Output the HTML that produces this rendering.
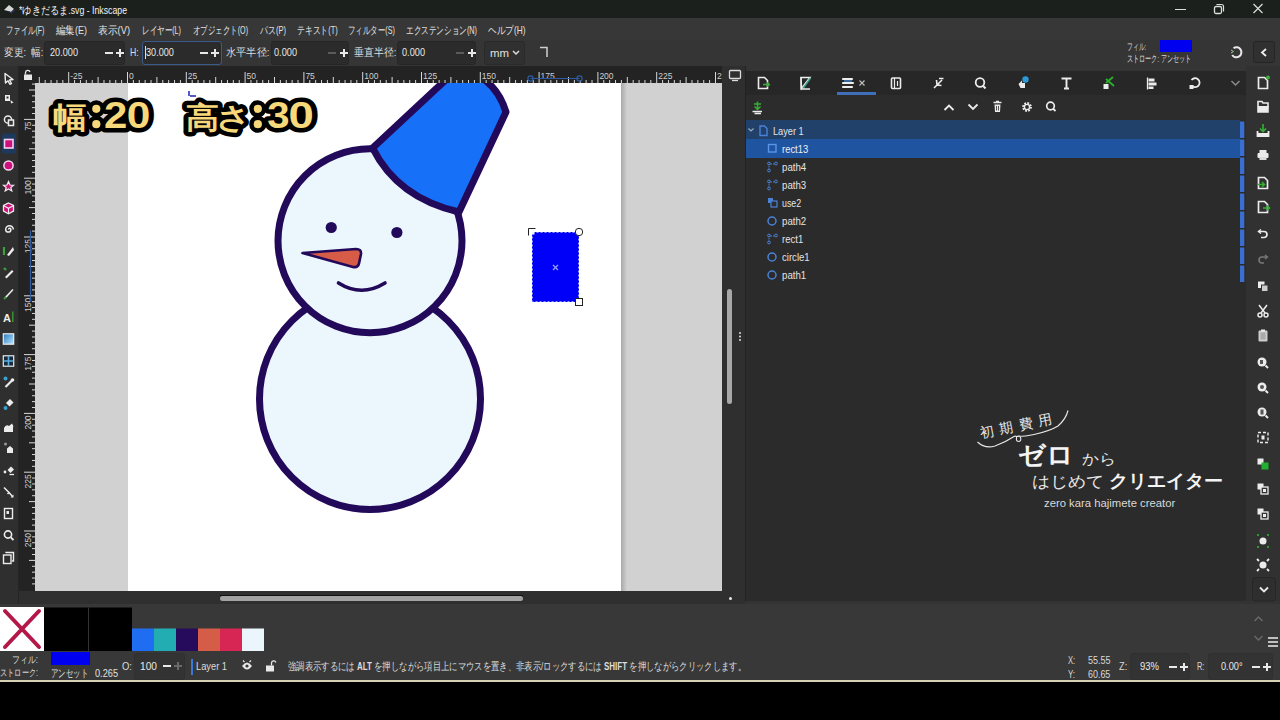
<!DOCTYPE html>
<html><head><meta charset="utf-8">
<style>
*{margin:0;padding:0;box-sizing:border-box}
html,body{width:1280px;height:720px;overflow:hidden;background:#000;font-family:"Liberation Sans",sans-serif;color:#e6e6e6}
.a{position:absolute}
.t{position:absolute;white-space:nowrap;line-height:1;transform-origin:0 50%}
svg{position:absolute;overflow:visible}
</style></head><body>
<div class="a" style="left:0px;top:0px;width:1280px;height:18px;background:#1b201c;"></div>
<div class="a" style="left:0px;top:18px;width:1280px;height:22px;background:#363736;"></div>
<div class="a" style="left:0px;top:40px;width:1280px;height:26px;background:#353535;"></div>
<div class="a" style="left:0px;top:66px;width:19px;height:538px;background:#2f2f2f;"></div>
<div class="a" style="left:18px;top:66px;width:1px;height:538px;background:#252525;"></div>
<div class="a" style="left:19px;top:66px;width:703px;height:17px;background:#232323;"></div>
<div class="a" style="left:19px;top:83px;width:16px;height:508px;background:#232323;"></div>
<div class="a" style="left:35px;top:83px;width:687px;height:508px;background:#d1d1d1;"></div>
<div class="a" style="left:128px;top:83px;width:493px;height:508px;background:#ffffff;"></div>
<div class="a" style="left:722px;top:66px;width:23px;height:538px;background:#2f2f2f;"></div>
<div class="a" style="left:19px;top:591px;width:703px;height:13px;background:#2f2f2f;"></div>
<div class="a" style="left:745px;top:66px;width:501px;height:535px;background:#2b2b2b;"></div>
<div class="a" style="left:745px;top:66px;width:1px;height:535px;background:#222222;"></div>
<div class="a" style="left:1246px;top:66px;width:34px;height:538px;background:#313131;"></div>
<div class="a" style="left:0px;top:604px;width:1280px;height:47px;background:#383838;"></div>
<div class="a" style="left:0px;top:651px;width:1280px;height:29px;background:#383838;"></div>
<div class="a" style="left:0px;top:680px;width:1280px;height:2px;background:#d6d2b4;"></div>
<svg style="left:3px;top:3px" width="14" height="12" viewBox="0 0 14 12"><path d="M1 7 L6 2 L11 6 L8 9 L5 8 Z" fill="#d8d8d8"/><path d="M5 8 L8 9 L11 6 L12 8 L8 11 Z" fill="#2a3050"/></svg>
<div class="t" style="transform:scaleX(0.833);left:19.4px;top:4.75px;font-size:10.5px;color:#f4f4f4;font-weight:400;">*ゆきだるま.svg - Inkscape</div>
<div class="a" style="left:1175px;top:9px;width:11px;height:1px;background:#dddddd;"></div>
<svg style="left:1213px;top:3px" width="12" height="12"><rect x="1.5" y="3.5" width="7" height="7" rx="1.5" fill="none" stroke="#ddd" stroke-width="1.3"/><path d="M3.5 1.5 H8.5 Q10.5 1.5 10.5 3.5 V8.5" fill="none" stroke="#ddd" stroke-width="1.2"/></svg>
<svg style="left:1252px;top:3px" width="12" height="12"><path d="M1.5 1 L10.5 10 M10.5 1 L1.5 10" stroke="#ddd" stroke-width="1.2"/></svg>
<div class="t" style="transform:scaleX(0.669);left:5.6px;top:24.75px;font-size:10.5px;color:#e2e2e2;font-weight:400;">ファイル(F)</div>
<div class="t" style="transform:scaleX(0.861);left:56px;top:24.75px;font-size:10.5px;color:#e2e2e2;font-weight:400;">編集(E)</div>
<div class="t" style="transform:scaleX(0.889);left:98px;top:24.75px;font-size:10.5px;color:#e2e2e2;font-weight:400;">表示(V)</div>
<div class="t" style="transform:scaleX(0.686);left:142px;top:24.75px;font-size:10.5px;color:#e2e2e2;font-weight:400;">レイヤー(L)</div>
<div class="t" style="transform:scaleX(0.678);left:193px;top:24.75px;font-size:10.5px;color:#e2e2e2;font-weight:400;">オブジェクト(O)</div>
<div class="t" style="transform:scaleX(0.722);left:260px;top:24.75px;font-size:10.5px;color:#e2e2e2;font-weight:400;">パス(P)</div>
<div class="t" style="transform:scaleX(0.709);left:297.3px;top:24.75px;font-size:10.5px;color:#e2e2e2;font-weight:400;">テキスト(T)</div>
<div class="t" style="transform:scaleX(0.678);left:348px;top:24.75px;font-size:10.5px;color:#e2e2e2;font-weight:400;">フィルター(S)</div>
<div class="t" style="transform:scaleX(0.692);left:406px;top:24.75px;font-size:10.5px;color:#e2e2e2;font-weight:400;">エクステンション(N)</div>
<div class="t" style="transform:scaleX(0.790);left:488.2px;top:24.75px;font-size:10.5px;color:#e2e2e2;font-weight:400;">ヘルプ(H)</div>
<div class="a" style="left:43.7px;top:41px;width:81.3px;height:23.5px;background:#2b2b2b;border:1px solid #262626;border-radius:3px;"></div>
<div class="a" style="left:142px;top:41px;width:79.5px;height:23.5px;background:#2b2b2b;border:1px solid #3a5a8a;border-radius:3px;"></div>
<div class="a" style="left:270.6px;top:41px;width:78.39999999999998px;height:23.5px;background:#2b2b2b;border:1px solid #262626;border-radius:3px;"></div>
<div class="a" style="left:397px;top:41px;width:79px;height:23.5px;background:#2b2b2b;border:1px solid #262626;border-radius:3px;"></div>
<div class="a" style="left:484px;top:41px;width:41px;height:23.5px;background:#303030;border:1px solid #2a2a2a;border-radius:3px;"></div>
<div class="t" style="transform:scaleX(0.883);left:4px;top:47.25px;font-size:10.5px;color:#dedede;font-weight:400;">変更:</div>
<div class="t" style="transform:scaleX(0.876);left:30.5px;top:47.25px;font-size:10.5px;color:#dedede;font-weight:400;">幅:</div>
<div class="t" style="transform:scaleX(0.832);left:49.8px;top:47.00px;font-size:11px;color:#e8e8e8;font-weight:400;">20.000</div>
<div class="a" style="left:104.7px;top:51.5px;width:8px;height:2px;background:#e8e8e8;"></div>
<div class="a" style="left:115.9px;top:51.5px;width:8px;height:2px;background:#e8e8e8;"></div>
<div class="a" style="left:118.9px;top:48.5px;width:2px;height:8px;background:#e8e8e8;"></div>
<div class="t" style="transform:scaleX(0.829);left:129.5px;top:47.25px;font-size:10.5px;color:#dedede;font-weight:400;">H:</div>
<div class="a" style="left:145px;top:46px;width:1px;height:13px;background:#e0e0e0;"></div>
<div class="t" style="transform:scaleX(0.829);left:146.3px;top:47.00px;font-size:11px;color:#e8e8e8;font-weight:400;">30.000</div>
<div class="a" style="left:200px;top:51.5px;width:8px;height:2px;background:#e8e8e8;"></div>
<div class="a" style="left:211.4px;top:51.5px;width:8px;height:2px;background:#e8e8e8;"></div>
<div class="a" style="left:214.4px;top:48.5px;width:2px;height:8px;background:#e8e8e8;"></div>
<div class="t" style="transform:scaleX(0.925);left:225.6px;top:47.25px;font-size:10.5px;color:#dedede;font-weight:400;">水平半径:</div>
<div class="t" style="transform:scaleX(0.835);left:274px;top:47.00px;font-size:11px;color:#e8e8e8;font-weight:400;">0.000</div>
<div class="a" style="left:328px;top:51.5px;width:8px;height:2px;background:#5a5a5a;"></div>
<div class="a" style="left:340px;top:51.5px;width:8px;height:2px;background:#e8e8e8;"></div>
<div class="a" style="left:343px;top:48.5px;width:2px;height:8px;background:#e8e8e8;"></div>
<div class="t" style="transform:scaleX(0.904);left:353.6px;top:47.25px;font-size:10.5px;color:#dedede;font-weight:400;">垂直半径:</div>
<div class="t" style="transform:scaleX(0.835);left:402px;top:47.00px;font-size:11px;color:#e8e8e8;font-weight:400;">0.000</div>
<div class="a" style="left:456px;top:51.5px;width:8px;height:2px;background:#5a5a5a;"></div>
<div class="a" style="left:468px;top:51.5px;width:8px;height:2px;background:#e8e8e8;"></div>
<div class="a" style="left:471px;top:48.5px;width:2px;height:8px;background:#e8e8e8;"></div>
<div class="t" style="transform:scaleX(1.086);left:490px;top:48.25px;font-size:10.5px;color:#e0e0e0;font-weight:400;">mm</div>
<svg style="left:512px;top:50px" width="8" height="6"><path d="M1 1 L4 4 L7 1" fill="none" stroke="#ddd" stroke-width="1.5"/></svg>
<svg style="left:539px;top:46px" width="10" height="12"><path d="M1 1.5 H8 V11" fill="none" stroke="#cfcfcf" stroke-width="1.5"/></svg>
<div class="t" style="transform:scaleX(0.582);left:1127px;top:42.25px;font-size:9.5px;color:#d8d8d8;font-weight:400;">フィル:</div>
<div class="a" style="left:1160px;top:40.3px;width:32px;height:11.7px;background:#0000f0;"></div>
<div class="t" style="transform:scaleX(0.608);left:1127px;top:53.75px;font-size:9.5px;color:#d8d8d8;font-weight:400;">ストローク: アンセット</div>
<svg style="left:1229px;top:45px" width="14" height="14"><path d="M4.5 3.2 A5 5 0 1 1 3.2 10" fill="none" stroke="#e8e8e8" stroke-width="2"/><path d="M2 5 L4.5 6.5 M2 8 L4.5 6.5" stroke="#9c9" stroke-width="1"/></svg>
<div class="a" style="left:1252.6px;top:41px;width:22.40000000000009px;height:22px;background:#303030;border:1px solid #252525;border-radius:3px;"></div>
<svg style="left:1260px;top:48px" width="8" height="9"><path d="M6 1 L2 4.5 L6 8" fill="none" stroke="#eee" stroke-width="1.8"/></svg>
<svg style="left:0;top:0" width="1280" height="720"><defs><clipPath id="hrc"><rect x="35" y="66" width="687" height="17"/></clipPath></defs><g clip-path="url(#hrc)"><path d="M39.30 77V83 M45.18 80V83 M51.06 80V83 M56.94 80V83 M62.82 80V83 M68.70 72V83 M74.58 80V83 M80.46 80V83 M86.34 80V83 M92.22 80V83 M98.10 77V83 M103.98 80V83 M109.86 80V83 M115.74 80V83 M121.62 80V83 M127.50 72V83 M133.38 80V83 M139.26 80V83 M145.14 80V83 M151.02 80V83 M156.90 77V83 M162.78 80V83 M168.66 80V83 M174.54 80V83 M180.42 80V83 M186.30 72V83 M192.18 80V83 M198.06 80V83 M203.94 80V83 M209.82 80V83 M215.70 77V83 M221.58 80V83 M227.46 80V83 M233.34 80V83 M239.22 80V83 M245.10 72V83 M250.98 80V83 M256.86 80V83 M262.74 80V83 M268.62 80V83 M274.50 77V83 M280.38 80V83 M286.26 80V83 M292.14 80V83 M298.02 80V83 M303.90 72V83 M309.78 80V83 M315.66 80V83 M321.54 80V83 M327.42 80V83 M333.30 77V83 M339.18 80V83 M345.06 80V83 M350.94 80V83 M356.82 80V83 M362.70 72V83 M368.58 80V83 M374.46 80V83 M380.34 80V83 M386.22 80V83 M392.10 77V83 M397.98 80V83 M403.86 80V83 M409.74 80V83 M415.62 80V83 M421.50 72V83 M427.38 80V83 M433.26 80V83 M439.14 80V83 M445.02 80V83 M450.90 77V83 M456.78 80V83 M462.66 80V83 M468.54 80V83 M474.42 80V83 M480.30 72V83 M486.18 80V83 M492.06 80V83 M497.94 80V83 M503.82 80V83 M509.70 77V83 M515.58 80V83 M521.46 80V83 M527.34 80V83 M533.22 80V83 M539.10 72V83 M544.98 80V83 M550.86 80V83 M556.74 80V83 M562.62 80V83 M568.50 77V83 M574.38 80V83 M580.26 80V83 M586.14 80V83 M592.02 80V83 M597.90 72V83 M603.78 80V83 M609.66 80V83 M615.54 80V83 M621.42 80V83 M627.30 77V83 M633.18 80V83 M639.06 80V83 M644.94 80V83 M650.82 80V83 M656.70 72V83 M662.58 80V83 M668.46 80V83 M674.34 80V83 M680.22 80V83 M686.10 77V83 M691.98 80V83 M697.86 80V83 M703.74 80V83 M709.62 80V83 M715.50 72V83" stroke="#d8d8d8" stroke-width="1"/><text x="70.2" y="78.5" font-size="8.5" fill="#cfcfcf" font-family="Liberation Sans">-25</text><text x="129.0" y="78.5" font-size="8.5" fill="#cfcfcf" font-family="Liberation Sans">0</text><text x="187.8" y="78.5" font-size="8.5" fill="#cfcfcf" font-family="Liberation Sans">25</text><text x="246.6" y="78.5" font-size="8.5" fill="#cfcfcf" font-family="Liberation Sans">50</text><text x="305.4" y="78.5" font-size="8.5" fill="#cfcfcf" font-family="Liberation Sans">75</text><text x="364.2" y="78.5" font-size="8.5" fill="#cfcfcf" font-family="Liberation Sans">100</text><text x="423.0" y="78.5" font-size="8.5" fill="#cfcfcf" font-family="Liberation Sans">125</text><text x="481.8" y="78.5" font-size="8.5" fill="#cfcfcf" font-family="Liberation Sans">150</text><text x="540.6" y="78.5" font-size="8.5" fill="#cfcfcf" font-family="Liberation Sans">175</text><text x="599.4" y="78.5" font-size="8.5" fill="#cfcfcf" font-family="Liberation Sans">200</text><text x="658.2" y="78.5" font-size="8.5" fill="#cfcfcf" font-family="Liberation Sans">225</text><text x="717.0" y="78.5" font-size="8.5" fill="#cfcfcf" font-family="Liberation Sans">250</text></g><text transform="translate(31 121.4) rotate(-90)" text-anchor="end" font-size="8.5" fill="#cfcfcf" font-family="Liberation Sans">75</text><text transform="translate(31 180.2) rotate(-90)" text-anchor="end" font-size="8.5" fill="#cfcfcf" font-family="Liberation Sans">100</text><text transform="translate(31 239.0) rotate(-90)" text-anchor="end" font-size="8.5" fill="#cfcfcf" font-family="Liberation Sans">125</text><text transform="translate(31 297.8) rotate(-90)" text-anchor="end" font-size="8.5" fill="#cfcfcf" font-family="Liberation Sans">150</text><text transform="translate(31 356.6) rotate(-90)" text-anchor="end" font-size="8.5" fill="#cfcfcf" font-family="Liberation Sans">175</text><text transform="translate(31 415.4) rotate(-90)" text-anchor="end" font-size="8.5" fill="#cfcfcf" font-family="Liberation Sans">200</text><text transform="translate(31 474.2) rotate(-90)" text-anchor="end" font-size="8.5" fill="#cfcfcf" font-family="Liberation Sans">225</text><text transform="translate(31 533.0) rotate(-90)" text-anchor="end" font-size="8.5" fill="#cfcfcf" font-family="Liberation Sans">250</text><path d="M32 84.12H35 M29 90.00H35 M32 95.88H35 M32 101.76H35 M32 107.64H35 M32 113.52H35 M24 119.40H35 M32 125.28H35 M32 131.16H35 M32 137.04H35 M32 142.92H35 M29 148.80H35 M32 154.68H35 M32 160.56H35 M32 166.44H35 M32 172.32H35 M24 178.20H35 M32 184.08H35 M32 189.96H35 M32 195.84H35 M32 201.72H35 M29 207.60H35 M32 213.48H35 M32 219.36H35 M32 225.24H35 M32 231.12H35 M24 237.00H35 M32 242.88H35 M32 248.76H35 M32 254.64H35 M32 260.52H35 M29 266.40H35 M32 272.28H35 M32 278.16H35 M32 284.04H35 M32 289.92H35 M24 295.80H35 M32 301.68H35 M32 307.56H35 M32 313.44H35 M32 319.32H35 M29 325.20H35 M32 331.08H35 M32 336.96H35 M32 342.84H35 M32 348.72H35 M24 354.60H35 M32 360.48H35 M32 366.36H35 M32 372.24H35 M32 378.12H35 M29 384.00H35 M32 389.88H35 M32 395.76H35 M32 401.64H35 M32 407.52H35 M24 413.40H35 M32 419.28H35 M32 425.16H35 M32 431.04H35 M32 436.92H35 M29 442.80H35 M32 448.68H35 M32 454.56H35 M32 460.44H35 M32 466.32H35 M24 472.20H35 M32 478.08H35 M32 483.96H35 M32 489.84H35 M32 495.72H35 M29 501.60H35 M32 507.48H35 M32 513.36H35 M32 519.24H35 M32 525.12H35 M24 531.00H35 M32 536.88H35 M32 542.76H35 M32 548.64H35 M32 554.52H35 M29 560.40H35 M32 566.28H35 M32 572.16H35 M32 578.04H35 M32 583.92H35" stroke="#d8d8d8" stroke-width="1"/><path d="M530.5 78.5H579.5" stroke="#2d5aa0" stroke-width="1.2"/><circle cx="530.5" cy="78.5" r="2.6" fill="none" stroke="#2d5aa0" stroke-width="1.2"/><circle cx="579.5" cy="78.5" r="2.6" fill="none" stroke="#2d5aa0" stroke-width="1.2"/><path d="M30.5 230.5V302" stroke="#2d5aa0" stroke-width="1.2"/><rect x="24" y="74.5" width="8" height="5.5" fill="#e8e8e8"/><path d="M25.5 74.5V72.5A2.3 2.3 0 0 1 30 72" fill="none" stroke="#e8e8e8" stroke-width="1.3"/><rect x="729.5" y="70.5" width="11" height="8" rx="1" fill="none" stroke="#dcdcdc" stroke-width="1.3"/><path d="M732 80.5H738" stroke="#dcdcdc" stroke-width="1.3"/></svg>
<svg style="left:0;top:0" width="20" height="600"><path d="M5 73.5 L13 79.5 L9.5 80 L11.5 83.5 L9.8 84.3 L8 80.8 L5.5 83 Z" fill="#2f2f2f" stroke="#ececec" stroke-width="1.4" stroke-linejoin="round"/><path d="M5 95 H10 V101 H5 Z" fill="#ececec"/><path d="M6.5 96.5 H8.5 V98.5 H6.5Z" fill="#2f2f2f"/><path d="M10.5 100 L13.5 102.5 L11 103.5Z" fill="#ececec"/><circle cx="8" cy="119.5" r="3.6" fill="none" stroke="#ececec" stroke-width="1.5"/><rect x="8.5" y="120" width="5" height="5.5" fill="#2f2f2f" stroke="#ececec" stroke-width="1.5"/><rect x="2" y="133.5" width="14" height="20" rx="2" fill="#1d3a5e"/><rect x="4.5" y="139.5" width="8.5" height="8.5" fill="#d0107a" stroke="#f4d0f0" stroke-width="1.6"/><circle cx="8.5" cy="165.5" r="4.6" fill="#d0107a" stroke="#f0d8f0" stroke-width="1.5"/><path d="M8.5 181.5 L10 185 L13.5 185.2 L10.8 187.5 L11.8 191 L8.5 189 L5.2 191 L6.2 187.5 L3.5 185.2 L7 185 Z" fill="#d0107a" stroke="#ececec" stroke-width="1.2"/><path d="M8.5 203 L13.5 205.5 V211 L8.5 213.8 L3.5 211 V205.5 Z" fill="#d0107a" stroke="#ececec" stroke-width="1.3"/><path d="M3.8 205.8 L8.5 208.3 L13.2 205.8 M8.5 208.3 V213.5" stroke="#ececec" stroke-width="1.1" fill="none"/><path d="M8.5 229.5 a1.2 1.2 0 0 1 2.4 0 a2.6 2.6 0 0 1 -5.2 0 a3.8 3.8 0 0 1 7.6 0" fill="none" stroke="#ececec" stroke-width="1.5"/><path d="M4 247 V255" stroke="#3aa03a" stroke-width="2.2"/><path d="M7 255 L13 247 L14 250 L9 256 Z" fill="#ececec"/><path d="M4 268 L6 270" stroke="#3aa03a" stroke-width="2.4"/><path d="M5 277 L12 270 L13.5 271.5 L6.5 278.5 Z" fill="#ececec"/><path d="M4 299 L7 296" stroke="#3aa03a" stroke-width="2"/><path d="M6 297 L13 289.5" stroke="#ececec" stroke-width="1.6"/><text x="3" y="321.5" font-size="11" font-weight="bold" fill="#ececec" font-family="Liberation Sans">A</text><path d="M12.8 311.5 V322" stroke="#3aa03a" stroke-width="1.3"/><defs><linearGradient id="gr" x1="0" y1="0" x2="1" y2="1"><stop offset="0" stop-color="#2a78c0"/><stop offset="1" stop-color="#b8e8ff"/></linearGradient></defs><rect x="3.3" y="333.8" width="10.4" height="10.4" fill="url(#gr)" stroke="#ececec" stroke-width="1.2"/><rect x="3.3" y="355.8" width="10.4" height="10.4" fill="#1a2a3a" stroke="#ececec" stroke-width="1.2"/><path d="M8.5 356 V366 M3.5 361 H13.5" stroke="#5ab0e0" stroke-width="1.6"/><circle cx="5.5" cy="378.5" r="2" fill="#3aa0d0"/><path d="M5.5 387 L12 380.5" stroke="#ececec" stroke-width="2.2"/><circle cx="12.5" cy="380" r="1.8" fill="#ececec"/><path d="M6 403 L10 399 L13.5 402.5 L9.5 406.5Z" fill="#ececec"/><circle cx="5.5" cy="408" r="2" fill="#3aa0d0"/><path d="M4 432 V428 Q6 424 9 426 L12 423.5 Q14 426 13 428 V432Z" fill="#ececec"/><circle cx="5.5" cy="444" r="1.5" fill="#999"/><path d="M7 453 V448.5 L10 446 L13 448.5 V453Z" fill="#ececec"/><path d="M7.5 470 L11 466.5 L14 469.5 L10.5 473Z" fill="#ececec"/><circle cx="5" cy="472" r="1.4" fill="#ececec"/><path d="M9.5 474.5 H14" stroke="#ececec" stroke-width="1.3"/><path d="M4 487.5 L9 492.5 L7.5 494 M9 492.5 L12.5 496.5" fill="none" stroke="#ececec" stroke-width="1.5"/><path d="M10.5 497.5 L13.5 497.5 L13.5 494.5Z" fill="#ececec"/><rect x="4.5" y="508.5" width="8" height="10" fill="none" stroke="#ececec" stroke-width="1.4"/><rect x="6.5" y="511" width="2.5" height="3" fill="#ececec"/><circle cx="8" cy="534.5" r="3.6" fill="none" stroke="#ececec" stroke-width="1.6"/><path d="M10.8 537.3 L13.5 540" stroke="#ececec" stroke-width="1.8"/><rect x="3.5" y="555" width="7.5" height="8.5" fill="#2f2f2f" stroke="#ececec" stroke-width="1.4"/><path d="M6 553 V552.5 H13.5 V561 H12" fill="none" stroke="#ececec" stroke-width="1.4"/></svg>
<svg style="left:0;top:0" width="1280" height="720"><defs><clipPath id="cc"><rect x="35" y="83" width="687" height="508"/></clipPath></defs><g clip-path="url(#cc)"><circle cx="370" cy="399" r="110.5" fill="#ebf7fd" stroke="#23095a" stroke-width="7"/><circle cx="370" cy="240.8" r="92" fill="#ebf7fd" stroke="#23095a" stroke-width="7"/><path d="M372.6 148 L452 74 L476 74 Q498 86 506 112 L459 212 Q397.6 198 372.6 148 Z" fill="#1770f8" stroke="#23095a" stroke-width="7" stroke-linejoin="round"/><circle cx="331.25" cy="227.5" r="5.6" fill="#23095a"/><circle cx="396.9" cy="232.5" r="5.6" fill="#23095a"/><path d="M302.5 253 L356 249 Q361.5 249 361 254 L359 263.5 Q358 268 353 267 Z" fill="#d65c48" stroke="#23095a" stroke-width="2.6" stroke-linejoin="round"/><path d="M338.5 283 Q361.5 297.5 385 283" fill="none" stroke="#23095a" stroke-width="3.6" stroke-linecap="round"/><rect x="532" y="232" width="47" height="70" fill="#0000f8"/><path d="M532.5 232.5 H578.5 V301.5 H532.5 Z" fill="none" stroke="#fff" stroke-width="1" stroke-dasharray="2 2" opacity=".6"/><path d="M528.5 235.5 V228.5 H535.5" fill="none" stroke="#222" stroke-width="1"/><rect x="529.5" y="229.5" width="5" height="5" fill="#fff" opacity=".9"/><circle cx="579" cy="232" r="3.7" fill="#fff" stroke="#222" stroke-width="1"/><rect x="575.5" y="298.5" width="7" height="7" fill="#fff" stroke="#222" stroke-width="1"/><path d="M553 265 L558 270 M558 265 L553 270" stroke="#9aa0ff" stroke-width="1.2"/><path d="M189 91 V96 M190 96 H196" stroke="#2020c0" stroke-width="1.5"/><g font-family="Liberation Sans" font-weight="bold" fill="#000" stroke="#000" stroke-width="9" stroke-linejoin="round"><text x="52.97" y="128" font-size="30" textLength="33.96000000000001" lengthAdjust="spacingAndGlyphs">幅</text><circle cx="96.3" cy="108.8" r="4.1"/><circle cx="96.3" cy="124.2" r="4.1"/><text x="104.1" y="127.8" font-size="36.3" textLength="23.30000000000001" lengthAdjust="spacingAndGlyphs">2</text><text x="126.65" y="127.8" font-size="36.3" textLength="23.599999999999994" lengthAdjust="spacingAndGlyphs">0</text><text x="185.5" y="128" font-size="30" textLength="33.099999999999994" lengthAdjust="spacingAndGlyphs">高</text><text x="216.2" y="128" font-size="30" textLength="35.30000000000001" lengthAdjust="spacingAndGlyphs">さ</text><circle cx="257.8" cy="108.8" r="4.1"/><circle cx="257.8" cy="124.2" r="4.1"/><text x="267.15" y="127.8" font-size="36.3" textLength="22.30000000000001" lengthAdjust="spacingAndGlyphs">3</text><text x="288.46" y="127.8" font-size="36.3" textLength="25.30000000000001" lengthAdjust="spacingAndGlyphs">0</text></g><g font-family="Liberation Sans" font-weight="bold" fill="#f7d87a"><text x="52.97" y="128" font-size="30" textLength="33.96000000000001" lengthAdjust="spacingAndGlyphs">幅</text><circle cx="96.3" cy="108.8" r="4.1"/><circle cx="96.3" cy="124.2" r="4.1"/><text x="104.1" y="127.8" font-size="36.3" textLength="23.30000000000001" lengthAdjust="spacingAndGlyphs">2</text><text x="126.65" y="127.8" font-size="36.3" textLength="23.599999999999994" lengthAdjust="spacingAndGlyphs">0</text><text x="185.5" y="128" font-size="30" textLength="33.099999999999994" lengthAdjust="spacingAndGlyphs">高</text><text x="216.2" y="128" font-size="30" textLength="35.30000000000001" lengthAdjust="spacingAndGlyphs">さ</text><circle cx="257.8" cy="108.8" r="4.1"/><circle cx="257.8" cy="124.2" r="4.1"/><text x="267.15" y="127.8" font-size="36.3" textLength="22.30000000000001" lengthAdjust="spacingAndGlyphs">3</text><text x="288.46" y="127.8" font-size="36.3" textLength="25.30000000000001" lengthAdjust="spacingAndGlyphs">0</text></g></g></svg>
<div class="a" style="left:621px;top:83px;width:6px;height:508px;background:linear-gradient(90deg,#a8a8a8,#d1d1d1)"></div>
<div class="a" style="left:220px;top:595px;width:303px;height:1px;background:#111111;"></div>
<div class="a" style="left:220px;top:596px;width:303px;height:5px;background:#a2a2a2;border-radius:3px"></div>
<div class="a" style="left:726.5px;top:289px;width:5.5px;height:115px;background:#a8a8a8;border-radius:3px"></div>
<div class="a" style="left:729px;top:597px;width:3px;height:3px;background:#e8e8e8;border-radius:2px"></div>
<svg style="left:738px;top:331px" width="5" height="11"><circle cx="2" cy="2" r="1" fill="#ddd"/><circle cx="2" cy="5.5" r="1" fill="#ddd"/><circle cx="2" cy="9" r="1" fill="#ddd"/></svg>
<div class="a" style="left:746px;top:66px;width:500px;height:5px;background:#353535;"></div>
<div class="a" style="left:746px;top:71px;width:500px;height:24px;background:#272727;"></div>
<div class="a" style="left:746px;top:95px;width:500px;height:25px;background:#2c2c2c;"></div>
<div class="a" style="left:746px;top:120px;width:494px;height:18.5px;background:#21406a;"></div>
<div class="a" style="left:746px;top:138.5px;width:494px;height:19px;background:#1f55a0;"></div>
<div class="a" style="left:836.5px;top:92px;width:39.5px;height:3px;background:#3f6fb8;"></div>
<svg style="left:0;top:0" width="1280" height="720"><path d="M758.5 77.5 H764.5 L767.5 80.5 V88.5 H758.5 Z" fill="none" stroke="#ececec" stroke-width="1.6"/><path d="M763 84.5 H769 M767 82.5 L769.3 84.5 L767 86.5" fill="none" stroke="#3ab03a" stroke-width="1.5"/><path d="M801 77.5 H810 L801.5 88.5 Z" fill="none" stroke="#ececec" stroke-width="1.5"/><path d="M810.5 78 L803 88.5" stroke="#3aa08a" stroke-width="1.6"/><path d="M801 77 V89 H810" fill="none" stroke="#ececec" stroke-width="1.3"/><path d="M843 79 H852 M843 83 H853 M843 87 H852" stroke="#ececec" stroke-width="2.2" stroke-linecap="round"/><path d="M844 81 H852" stroke="#3a8ad0" stroke-width="1.4"/><path d="M859.5 80.5 L864.5 85.5 M864.5 80.5 L859.5 85.5" stroke="#bbb" stroke-width="1.2"/><rect x="891.5" y="78" width="9" height="10.5" rx="1" fill="none" stroke="#ececec" stroke-width="1.6"/><path d="M894.5 78 V88.5 M897.5 81 V86" stroke="#ececec" stroke-width="1.2"/><path d="M934 88 L942 80 M936.5 80 L937 85 L941.5 85.5 M939 78.5 L943.5 78.5" fill="none" stroke="#ececec" stroke-width="1.6"/><circle cx="980" cy="82.5" r="4.3" fill="none" stroke="#ececec" stroke-width="1.8"/><path d="M983 85.8 L985.5 88.5" stroke="#ececec" stroke-width="2"/><path d="M1018.5 84 L1022 80.5 L1022 83 L1025 83 V88 H1020.5 Z" fill="#ececec"/><circle cx="1025.5" cy="79.5" r="3.2" fill="#2a9ad8"/><path d="M1061.5 78.5 H1071.5 M1066.5 78.5 V88.5 M1064 88.5 H1069" stroke="#ececec" stroke-width="1.9"/><rect x="1103.5" y="84" width="5" height="5" fill="#ececec"/><path d="M1106 83 L1113 77 M1106 79 L1114 86" stroke="#2bb02b" stroke-width="1.8"/><path d="M1147.5 77.5 V89.5" stroke="#ececec" stroke-width="1.3"/><rect x="1148.5" y="78.5" width="6" height="3" fill="#ececec"/><rect x="1148.5" y="82.5" width="8" height="3" fill="#ececec"/><rect x="1148.5" y="86.5" width="5" height="2.5" fill="#ececec"/><path d="M1191.5 80 A4.5 4.5 0 1 1 1192 86" fill="none" stroke="#ececec" stroke-width="1.8"/><rect x="1189.5" y="85" width="4" height="4" fill="#ececec"/><path d="M1231.5 81 L1235.5 85 L1239.5 81" fill="none" stroke="#8a8a8a" stroke-width="1.5"/><path d="M752.5 111.5 H762 M754.5 113.5 H761" stroke="#ececec" stroke-width="1.6"/><path d="M757.5 101.5 V109.5 M754.5 106.5 L757.5 109.5 L760.5 106.5 M754 104 H761" fill="none" stroke="#35b035" stroke-width="1.5"/><path d="M944.5 110 L949 105.5 L953.5 110" fill="none" stroke="#ececec" stroke-width="1.8"/><path d="M968.5 104.5 L973 109 L977.5 104.5" fill="none" stroke="#ececec" stroke-width="1.8"/><path d="M993.5 102.5 H1001.5 M996 101.5 H999" stroke="#ececec" stroke-width="1.6"/><path d="M994.5 104.5 H1000.5 L1000 112 H995 Z" fill="#ececec"/><path d="M996.5 106 V110.5 M998.5 106 V110.5" stroke="#2c2c2c" stroke-width=".8"/><circle cx="1027" cy="107" r="3.6" fill="none" stroke="#ececec" stroke-width="2.6" stroke-dasharray="1.6 1.2"/><circle cx="1027" cy="107" r="2.6" fill="none" stroke="#ececec" stroke-width="1.4"/><circle cx="1050.5" cy="106" r="3.8" fill="none" stroke="#ececec" stroke-width="1.7"/><path d="M1053.3 108.8 L1055.5 111" stroke="#ececec" stroke-width="1.9"/><path d="M748.5 128.5 L751 131 L753.5 128.5" fill="none" stroke="#9ab" stroke-width="1.2"/><path d="M760 126 H764.5 L767 128.5 V135.5 H760 Z" fill="none" stroke="#4a82d8" stroke-width="1.4"/><rect x="768.5" y="144.5" width="7.5" height="7.5" fill="none" stroke="#5a95e8" stroke-width="1.4"/><path d="M769 170 V164 H775" fill="none" stroke="#4a82d8" stroke-width="1" stroke-dasharray="1.5 1"/><circle cx="769" cy="163.5" r="1.4" fill="none" stroke="#4a82d8" stroke-width="1"/><circle cx="776" cy="163.5" r="1.4" fill="none" stroke="#4a82d8" stroke-width="1"/><circle cx="769" cy="170.5" r="1.4" fill="none" stroke="#4a82d8" stroke-width="1"/><path d="M769 188 V182 H775" fill="none" stroke="#4a82d8" stroke-width="1" stroke-dasharray="1.5 1"/><circle cx="769" cy="181.5" r="1.4" fill="none" stroke="#4a82d8" stroke-width="1"/><circle cx="776" cy="181.5" r="1.4" fill="none" stroke="#4a82d8" stroke-width="1"/><circle cx="769" cy="188.5" r="1.4" fill="none" stroke="#4a82d8" stroke-width="1"/><path d="M769 242 V236 H775" fill="none" stroke="#4a82d8" stroke-width="1" stroke-dasharray="1.5 1"/><circle cx="769" cy="235.5" r="1.4" fill="none" stroke="#4a82d8" stroke-width="1"/><circle cx="776" cy="235.5" r="1.4" fill="none" stroke="#4a82d8" stroke-width="1"/><circle cx="769" cy="242.5" r="1.4" fill="none" stroke="#4a82d8" stroke-width="1"/><rect x="768" y="198" width="5" height="5" fill="#4a82d8"/><rect x="771" y="201" width="6" height="6" fill="#2b2b2b" stroke="#4a82d8" stroke-width="1.2"/><circle cx="772" cy="221" r="4" fill="none" stroke="#4a82d8" stroke-width="1.5"/><circle cx="772" cy="257" r="4" fill="none" stroke="#4a82d8" stroke-width="1.5"/><circle cx="772" cy="275" r="4" fill="none" stroke="#4a82d8" stroke-width="1.5"/><rect x="1240" y="121.5" width="4.3" height="16.5" fill="#3a6fd0"/><rect x="1240" y="139.5" width="4.3" height="16.5" fill="#3a6fd0"/><rect x="1240" y="157.5" width="4.3" height="16.5" fill="#3a6fd0"/><rect x="1240" y="175.5" width="4.3" height="16.5" fill="#3a6fd0"/><rect x="1240" y="193.5" width="4.3" height="16.5" fill="#3a6fd0"/><rect x="1240" y="211.5" width="4.3" height="16.5" fill="#3a6fd0"/><rect x="1240" y="229.5" width="4.3" height="16.5" fill="#3a6fd0"/><rect x="1240" y="247.5" width="4.3" height="16.5" fill="#3a6fd0"/><rect x="1240" y="265.5" width="4.3" height="16.5" fill="#3a6fd0"/><path d="M977.5 442 Q985 449 995 446 Q1005 442.5 1014 436.5 Q1017 435 1016.5 438 Q1016 441.5 1019 441.5 Q1021.5 441 1020.5 437.5 Q1019.5 435 1017 436.5 Q1026 436.5 1034 434.5 Q1050 431 1058 426 Q1066 419 1068 410.5" fill="none" stroke="#e8e8e8" stroke-width="1.1"/><g transform="translate(981 437.5) rotate(-11)" fill="#e8e8e8" font-size="14" font-family="Liberation Sans"><text x="0" y="0" textLength="73" lengthAdjust="spacing">初期費用</text></g></svg>
<div class="t" style="transform:scaleX(0.834);left:772.6px;top:125.50px;font-size:11px;color:#e4e4e4;font-weight:400;">Layer 1</div>
<div class="t" style="transform:scaleX(0.857);left:781.8px;top:144.00px;font-size:11px;color:#e8eef8;font-weight:400;">rect13</div>
<div class="t" style="transform:scaleX(0.879);left:781.8px;top:162.00px;font-size:11px;color:#e4e4e4;font-weight:400;">path4</div>
<div class="t" style="transform:scaleX(0.879);left:781.8px;top:180.00px;font-size:11px;color:#e4e4e4;font-weight:400;">path3</div>
<div class="t" style="transform:scaleX(0.805);left:781.8px;top:198.00px;font-size:11px;color:#e4e4e4;font-weight:400;">use2</div>
<div class="t" style="transform:scaleX(0.879);left:781.8px;top:216.00px;font-size:11px;color:#e4e4e4;font-weight:400;">path2</div>
<div class="t" style="transform:scaleX(0.866);left:781.8px;top:234.00px;font-size:11px;color:#e4e4e4;font-weight:400;">rect1</div>
<div class="t" style="transform:scaleX(0.871);left:781.8px;top:252.00px;font-size:11px;color:#e4e4e4;font-weight:400;">circle1</div>
<div class="t" style="transform:scaleX(0.879);left:781.8px;top:270.00px;font-size:11px;color:#e4e4e4;font-weight:400;">path1</div>
<div class="t" style="transform:scaleX(1.041);left:1017.5px;top:442.00px;font-size:26px;color:#f4f4f4;font-weight:700;">ゼロ</div>
<div class="t" style="transform:scaleX(1.123);left:1081.9px;top:451.00px;font-size:15px;color:#e8e8e8;font-weight:400;">から</div>
<div class="t" style="transform:scaleX(1.116);left:1032.3px;top:473.50px;font-size:16px;color:#e8e8e8;font-weight:400;">はじめて</div>
<div class="t" style="transform:scaleX(1.056);left:1108.6px;top:472.00px;font-size:18px;color:#f4f4f4;font-weight:700;">クリエイター</div>
<div class="t" style="transform:scaleX(1.027);left:1043.8px;top:498.00px;font-size:11px;color:#dadada;font-weight:400;">zero kara hajimete creator</div>
<div class="a" style="left:745px;top:601px;width:535px;height:3px;background:#333333;"></div>
<svg style="left:0;top:0" width="1280" height="720"><path d="M1258.5 77.5 H1264.5 L1267.5 80.5 V88.5 H1258.5 Z" fill="none" stroke="#ececec" stroke-width="1.7"/><circle cx="1268" cy="77.5" r="2" fill="#3ab03a"/><path d="M1258 101.5 H1262 L1263 103 H1268 V112 H1258 Z" fill="none" stroke="#ececec" stroke-width="1.6"/><path d="M1258 106 H1268.5 L1267.5 112 H1258Z" fill="#ececec"/><path d="M1257.5 131 V136 H1268.5 V131" fill="none" stroke="#ececec" stroke-width="1.8"/><rect x="1258" y="133" width="10" height="2.5" fill="#ececec"/><path d="M1263 124 V131 M1260 128.5 L1263 131.5 L1266 128.5" fill="none" stroke="#35b035" stroke-width="1.6"/><rect x="1259.5" y="150" width="7" height="3" fill="#ececec"/><rect x="1257.5" y="153" width="11" height="5" rx="1" fill="#ececec"/><rect x="1259.5" y="157" width="7" height="3" fill="#ddd"/><path d="M1258.5 177.5 H1264.5 L1267.5 180.5 V188.5 H1258.5 Z" fill="none" stroke="#ececec" stroke-width="1.7"/><path d="M1257 184.5 H1264 M1262 182 L1264.5 184.5 L1262 187" fill="none" stroke="#35b035" stroke-width="1.5"/><path d="M1258.5 201.5 H1264.5 L1267.5 204.5 V212.5 H1258.5 Z" fill="none" stroke="#ececec" stroke-width="1.7"/><path d="M1263 208 H1269 M1267 205.5 L1269.5 208 L1267 210.5" fill="none" stroke="#35b035" stroke-width="1.5"/><path d="M1259 231.5 H1264 A3 3 0 0 1 1264 237.5 H1261" fill="none" stroke="#ececec" stroke-width="1.7"/><path d="M1261 229.5 L1258.5 231.5 L1261 233.5" fill="none" stroke="#ececec" stroke-width="1.5"/><path d="M1267 257 H1262 A3 3 0 0 0 1262 263 H1264" fill="none" stroke="#777" stroke-width="1.6"/><path d="M1265 255 L1267.5 257 L1265 259" fill="none" stroke="#777" stroke-width="1.4"/><rect x="1258" y="281.5" width="6.5" height="6.5" fill="#ececec"/><rect x="1261.5" y="285" width="6.5" height="6.5" fill="#ccc" stroke="#333" stroke-width="1"/><circle cx="1260" cy="315" r="2" fill="none" stroke="#ececec" stroke-width="1.5"/><circle cx="1266" cy="315" r="2" fill="none" stroke="#ececec" stroke-width="1.5"/><path d="M1259 305 L1265 313 M1267 305 L1261 313" stroke="#ececec" stroke-width="1.5"/><rect x="1258.5" y="330.5" width="9" height="11" rx="1" fill="#ccc"/><rect x="1260.5" y="332.5" width="5" height="7" fill="#aaa"/><rect x="1261" y="329.5" width="4" height="2" fill="#ececec"/><circle cx="1262" cy="362" r="4.5" fill="#ececec"/><path d="M1265.5 365.5 L1268 368" stroke="#ececec" stroke-width="2"/><rect x="1260" y="360" width="3" height="4" fill="#555"/><circle cx="1262" cy="387" r="4.5" fill="#ececec"/><path d="M1265.5 390.5 L1268 393" stroke="#ececec" stroke-width="2"/><circle cx="1262" cy="387" r="2" fill="#555"/><circle cx="1262" cy="412" r="4.5" fill="#ececec"/><path d="M1265.5 415.5 L1268 418" stroke="#ececec" stroke-width="2"/><rect x="1260.5" y="409.5" width="3" height="5" fill="#555"/><rect x="1258" y="432.5" width="10" height="10" fill="none" stroke="#ececec" stroke-width="1.4" stroke-dasharray="3 2"/><rect x="1261.5" y="435.5" width="3" height="4" fill="#ececec"/><rect x="1257.5" y="458.5" width="6" height="6" fill="#ececec"/><rect x="1261.5" y="462.5" width="7" height="7" fill="#22b030"/><rect x="1257.5" y="483.5" width="6" height="6" fill="#ececec"/><rect x="1261" y="487" width="7" height="7" fill="#333" stroke="#ececec" stroke-width="1.3"/><rect x="1263" y="489" width="3" height="3" fill="#ececec"/><rect x="1257.5" y="508.5" width="6" height="6" fill="#ececec"/><rect x="1261" y="512" width="7" height="7" fill="#333" stroke="#ececec" stroke-width="1.3"/><rect x="1263" y="514" width="3" height="3" fill="#ececec"/><circle cx="1263" cy="541" r="3.5" fill="#ececec"/><path d="M1257 535 h2 M1267 535 h2 M1257 547 h2 M1267 547 h2" stroke="#2a9a2a" stroke-width="2"/><circle cx="1263" cy="565" r="3.5" fill="#ececec"/><path d="M1257 559 l2 2 M1269 559 l-2 2 M1257 571 l2 -2 M1269 571 l-2 -2" stroke="#ececec" stroke-width="1.8"/><rect x="1252.5" y="577.5" width="23" height="23.5" rx="3" fill="#2e2e2e" stroke="#262626"/><path d="M1260 587.5 L1264 591.5 L1268 587.5" fill="none" stroke="#ececec" stroke-width="1.8"/><path d="M1254.5 621 L1258.5 617 L1262.5 621 M1254.5 636 L1258.5 640 L1262.5 636" fill="none" stroke="#6a6a6a" stroke-width="1.4"/><path d="M1268 638 H1278 M1268 642 H1278 M1268 646 H1278" stroke="#ececec" stroke-width="1.6"/></svg>
<svg style="left:0;top:0" width="1280" height="720"><rect x="0" y="607" width="44" height="44" fill="#ffffff"/><path d="M5 611 L39 647 M39 611 L5 647" stroke="#b41848" stroke-width="4" stroke-linecap="round"/><rect x="44" y="607.5" width="88" height="43.5" fill="#000"/><path d="M88.5 607.5 V651" stroke="#333" stroke-width="1"/><rect x="132" y="628.5" width="22" height="22.5" fill="#1f6ef2"/><rect x="154" y="628.5" width="22" height="22.5" fill="#22adb2"/><rect x="176" y="628.5" width="22" height="22.5" fill="#260a5c"/><rect x="198" y="628.5" width="22" height="22.5" fill="#d55c47"/><rect x="220" y="628.5" width="22" height="22.5" fill="#d72654"/><rect x="242" y="628.5" width="22" height="22.5" fill="#eaf5fc"/></svg>
<div class="t" style="transform:scaleX(0.793);left:12px;top:655.00px;font-size:10px;color:#d8d8d8;font-weight:400;">フィル:</div>
<div class="t" style="transform:scaleX(0.720);left:0px;top:668.00px;font-size:10px;color:#d8d8d8;font-weight:400;">ストローク:</div>
<div class="a" style="left:50.5px;top:652px;width:39.5px;height:13px;background:#0000f0;"></div>
<div class="t" style="transform:scaleX(0.673);left:51px;top:667.75px;font-size:10.5px;color:#e0e0e0;font-weight:400;">アンセット</div>
<div class="t" style="transform:scaleX(0.875);left:95px;top:667.75px;font-size:10.5px;color:#e0e0e0;font-weight:400;">0.265</div>
<div class="t" style="transform:scaleX(0.901);left:122px;top:660.75px;font-size:10.5px;color:#dcdcdc;font-weight:400;">O:</div>
<div class="a" style="left:134px;top:652.5px;width:51px;height:27.5px;background:#333333;border:1px solid #303030;border-radius:3px;"></div>
<div class="t" style="transform:scaleX(0.926);left:140px;top:660.50px;font-size:11px;color:#e8e8e8;font-weight:400;">100</div>
<div class="a" style="left:163px;top:665px;width:8px;height:2px;background:#e8e8e8;"></div>
<div class="a" style="left:173.5px;top:665px;width:8px;height:2px;background:#6a6a6a;"></div>
<div class="a" style="left:176.5px;top:662px;width:2px;height:8px;background:#6a6a6a;"></div>
<div class="a" style="left:190.5px;top:658.5px;width:2px;height:16px;background:#3a78d8;"></div>
<div class="t" style="transform:scaleX(0.845);left:196px;top:660.50px;font-size:11px;color:#dcdcdc;font-weight:400;">Layer 1</div>
<svg style="left:0;top:0" width="1280" height="720"><path d="M242 666 Q247 659 252 666 Q247 673 242 666Z" fill="#e8e8e8"/><circle cx="247" cy="666" r="1.6" fill="#383838"/><path d="M243 660.5 L244.5 662 M251 660.5 L249.5 662" stroke="#e8e8e8" stroke-width="1.2"/><rect x="266" y="665.5" width="8" height="6" fill="#e8e8e8"/><path d="M271.5 665.5 V663 A2.2 2.2 0 0 1 275.8 662.5" fill="none" stroke="#e8e8e8" stroke-width="1.3"/></svg>
<div class="t" style="transform:scaleX(0.759);left:288px;top:660.75px;font-size:10.5px;color:#dcdcdc;font-weight:400;">強調表示するには <b>ALT</b> を押しながら項目上にマウスを置き、非表示/ロックするには <b>SHIFT</b> を押しながらクリックします。</div>
<div class="t" style="transform:scaleX(0.726);left:1067.8px;top:654.75px;font-size:10.5px;color:#d8d8d8;font-weight:400;">X:</div>
<div class="t" style="transform:scaleX(0.856);left:1087.8px;top:654.75px;font-size:10.5px;color:#d8d8d8;font-weight:400;">55.55</div>
<div class="t" style="transform:scaleX(0.749);left:1068px;top:668.75px;font-size:10.5px;color:#d8d8d8;font-weight:400;">Y:</div>
<div class="t" style="transform:scaleX(0.849);left:1088px;top:668.75px;font-size:10.5px;color:#d8d8d8;font-weight:400;">60.65</div>
<div class="t" style="transform:scaleX(0.878);left:1118.8px;top:661.25px;font-size:10.5px;color:#d8d8d8;font-weight:400;">Z:</div>
<div class="a" style="left:1129.7px;top:652.5px;width:60.0px;height:27.5px;background:#333333;border:1px solid #303030;border-radius:3px;"></div>
<div class="t" style="transform:scaleX(0.862);left:1140px;top:661.00px;font-size:11px;color:#e8e8e8;font-weight:400;">93%</div>
<div class="a" style="left:1168.5px;top:665.5px;width:8px;height:2px;background:#e8e8e8;"></div>
<div class="a" style="left:1180px;top:665.5px;width:8px;height:2px;background:#e8e8e8;"></div>
<div class="a" style="left:1183px;top:662.5px;width:2px;height:8px;background:#e8e8e8;"></div>
<div class="t" style="transform:scaleX(0.705);left:1196.6px;top:661.25px;font-size:10.5px;color:#d8d8d8;font-weight:400;">R:</div>
<div class="a" style="left:1208px;top:652.5px;width:64.59999999999991px;height:27.5px;background:#333333;border:1px solid #303030;border-radius:3px;"></div>
<div class="t" style="transform:scaleX(0.837);left:1221px;top:661.00px;font-size:11px;color:#e8e8e8;font-weight:400;">0.00°</div>
<div class="a" style="left:1252px;top:665.5px;width:8px;height:2px;background:#e8e8e8;"></div>
<div class="a" style="left:1263px;top:665.5px;width:8px;height:2px;background:#e8e8e8;"></div>
<div class="a" style="left:1266px;top:662.5px;width:2px;height:8px;background:#e8e8e8;"></div>
</body></html>
